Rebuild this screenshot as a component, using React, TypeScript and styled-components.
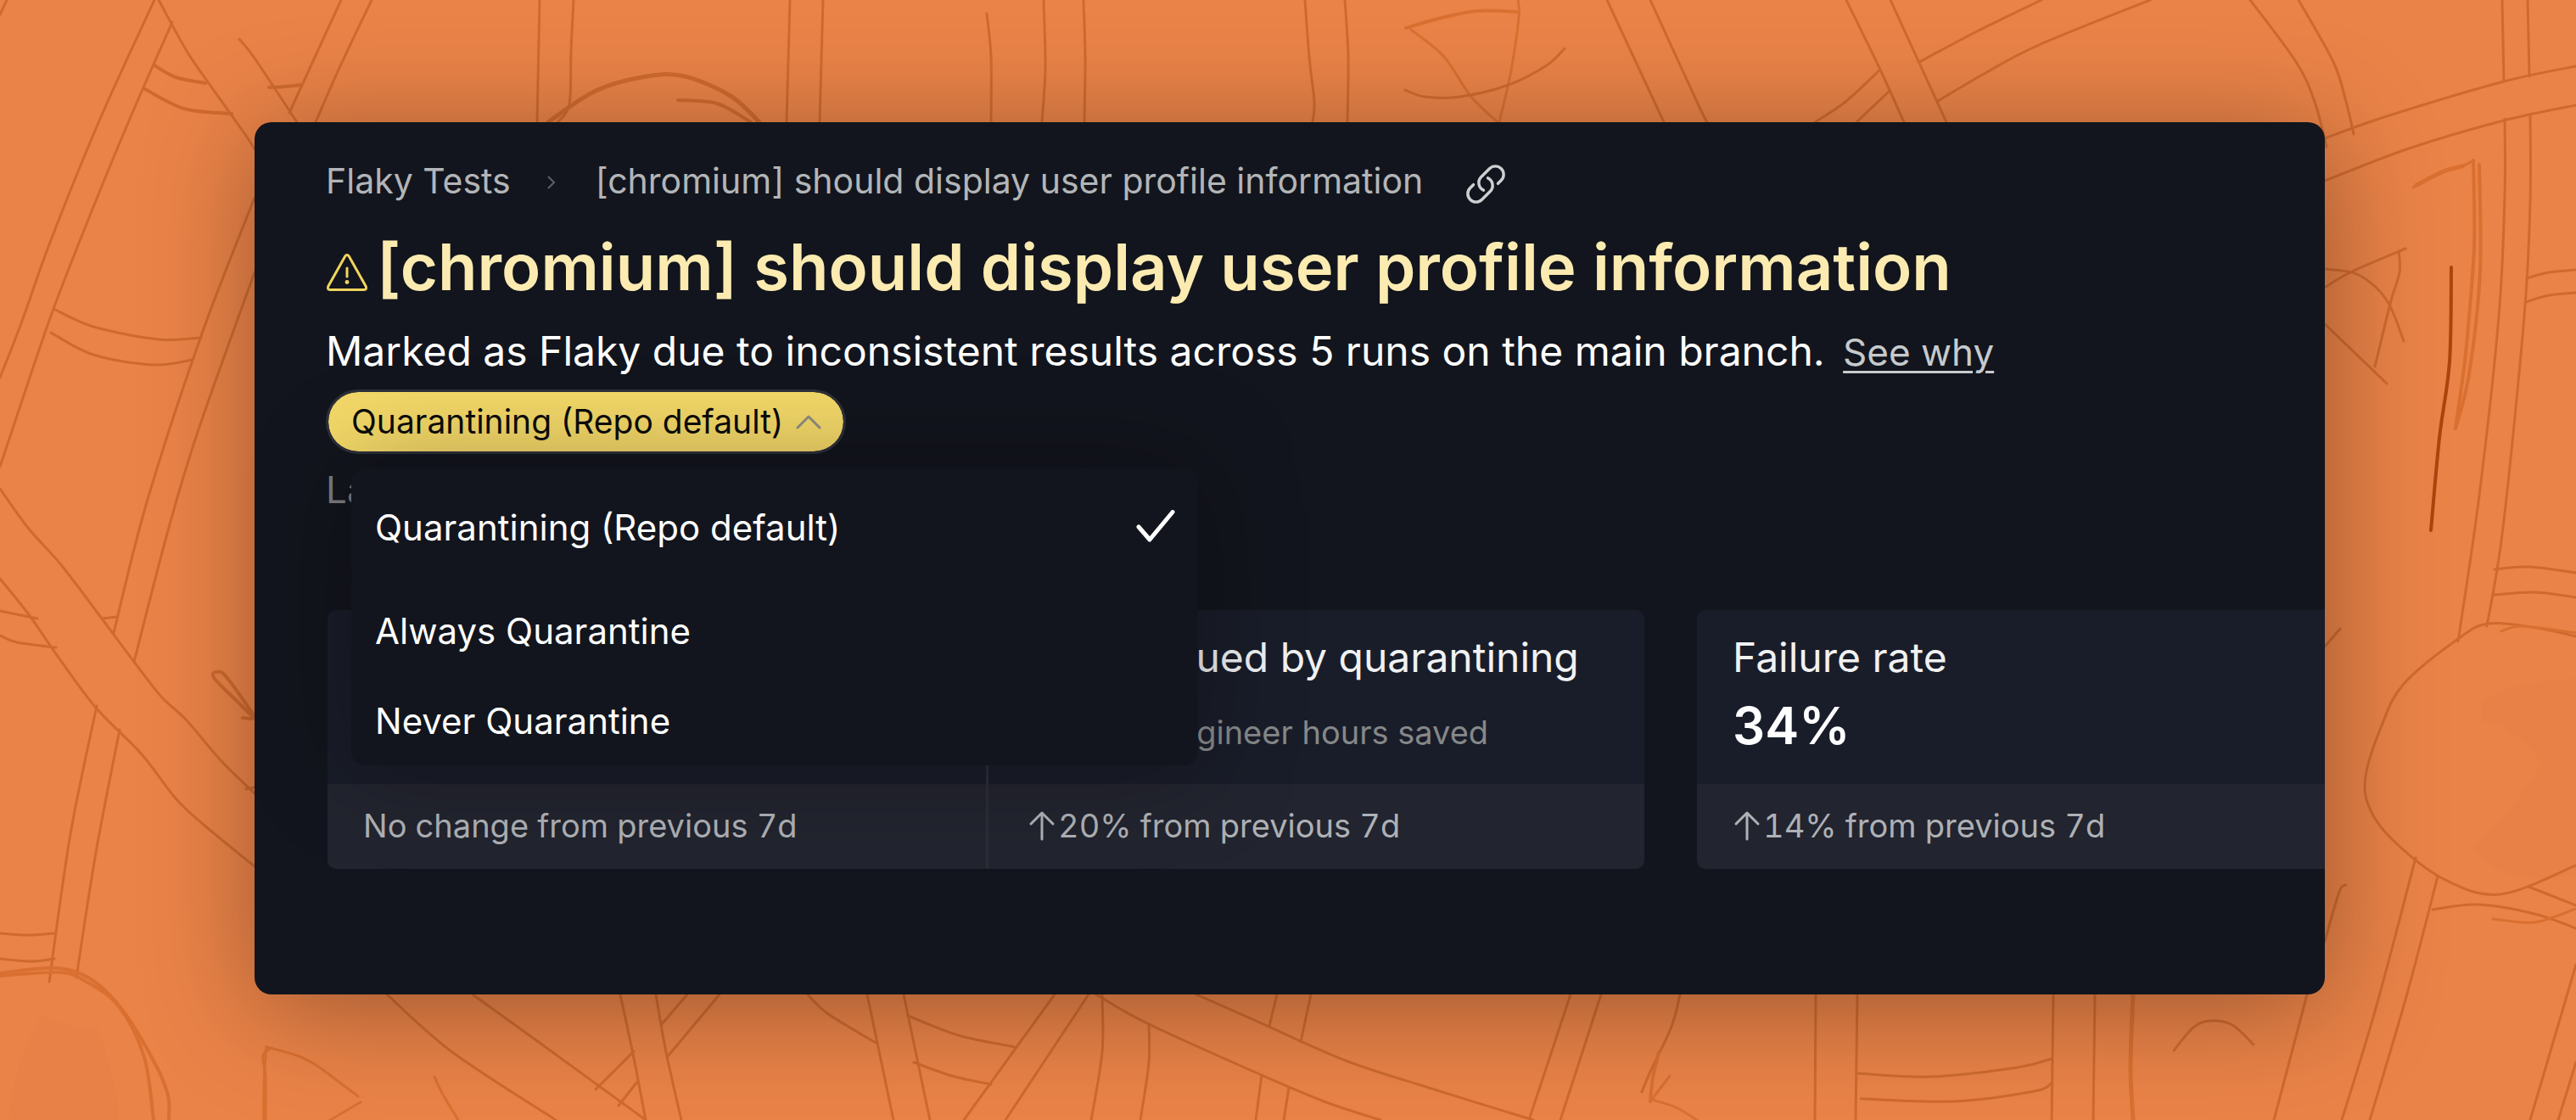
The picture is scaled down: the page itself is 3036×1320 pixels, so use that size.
import React, { useState } from "react";
import styled, { createGlobalStyle } from "styled-components";

const GlobalStyle = createGlobalStyle`
  *, *::before, *::after { box-sizing: border-box; }
  body { margin: 0; background: #ea8348; }
  button { font: inherit; color: inherit; background: none; border: 0; cursor: pointer; text-align: left; }
`;

/* ---------- background sketch ---------- */

type Stroke = { p: number[]; w?: number; c?: string };

const LINE = "#cf6a2f";
const SOFT = "#d97031";
const INK = "#ad440d";

const strokes: Stroke[] = [
  // top left girders
  { p: [8, 0, 0, 17] },
  { p: [182, 0, 118, 140, 60, 283, 25, 381, 0, 445] },
  { p: [203, 26, 153, 140, 110, 244, 63, 364, 22, 484, 0, 550] },
  { p: [187, 0, 220, 60, 246, 98, 290, 160, 300, 176] },
  { p: [182, 77, 207, 91, 242, 98], w: 4 },
  { p: [171, 105, 217, 128, 273, 134], w: 4 },
  { p: [402, 0, 341, 133] },
  { p: [438, 0, 400, 80, 372, 144] },
  { p: [282, 46, 301, 70, 350, 144] },
  { p: [317, 103, 336, 102, 354, 100], w: 4 },
  { p: [636, 0, 633, 144] },
  { p: [676, 0, 673, 60, 671, 123, 657, 144] },
  { p: [646, 144, 702, 107, 762, 90, 807, 90, 861, 113, 895, 144], w: 5 },
  { p: [799, 118, 845, 122, 885, 144], w: 4 },
  { p: [931, 0, 927, 144] },
  { p: [970, 0, 966, 144] },
  // top middle
  { p: [1163, 16, 1168, 67, 1168, 144] },
  { p: [1230, 0, 1232, 80, 1228, 144] },
  { p: [1277, 0, 1279, 70, 1278, 144] },
  { p: [1538, 0, 1543, 67, 1549, 120, 1547, 144] },
  { p: [1585, 0, 1589, 67, 1588, 144] },
  { p: [1789, 0, 1790, 20, 1781, 83, 1767, 144], c: SOFT },
  { p: [1789, 14, 1740, 13, 1695, 22, 1657, 33], w: 4, c: SOFT },
  { p: [1663, 35, 1702, 67, 1733, 113, 1765, 144], c: SOFT },
  { p: [1656, 106, 1679, 114, 1721, 114, 1778, 100, 1823, 77, 1844, 57] },
  { p: [1894, 0, 1961, 144] },
  { p: [1945, 0, 2000, 120, 2012, 144] },
  // top right
  { p: [2176, 0, 2215, 80, 2244, 144] },
  { p: [2228, 0, 2294, 144] },
  { p: [2406, 0, 2330, 37, 2262, 73] },
  { p: [2534, 0, 2403, 53, 2340, 86, 2284, 119] },
  { p: [2215, 83, 2175, 120, 2139, 144] },
  { p: [2227, 107, 2188, 144] },
  { p: [2652, 0, 2706, 73, 2728, 120, 2742, 173] },
  { p: [2709, 0, 2750, 73, 2765, 120, 2774, 158] },
  { p: [3036, 78, 2951, 96, 2813, 137, 2740, 163] },
  { p: [3036, 124, 2951, 142, 2839, 175, 2740, 213] },
  { p: [2949, 0, 2951, 95] },
  { p: [2979, 0, 2981, 90] },
  { p: [2952, 140, 2952, 230, 2945, 373, 2922, 584, 2897, 756] },
  { p: [2982, 136, 2982, 238, 2975, 373, 2950, 622, 2931, 738] },
  { p: [2844, 221, 2870, 206, 2902, 196, 2915, 189], w: 3, c: SOFT },
  { p: [2915, 189, 2916, 290, 2908, 396, 2903, 441, 2894, 505], w: 4, c: SOFT },
  { p: [2848, 218, 2880, 202, 2902, 196], w: 5, c: SOFT },
  { p: [2922, 194, 2923, 321, 2910, 441, 2894, 505], w: 4, c: SOFT },
  { p: [2889, 315, 2887, 426, 2875, 516, 2865, 625], w: 4, c: INK },
  { p: [2740, 339, 2770, 321, 2835, 293] },
  { p: [2827, 296, 2828, 321, 2817, 358, 2799, 432] },
  { p: [2740, 317, 2780, 324, 2813, 354, 2833, 402] },
  { p: [2740, 382, 2813, 452] },
  { p: [2978, 328, 3004, 321, 3036, 318] },
  { p: [2977, 356, 3004, 348, 3036, 345] },
  { p: [2940, 671, 2980, 668, 3036, 675] },
  { p: [2940, 701, 2987, 698, 3036, 704] },
  // right boulder
  { p: [3036, 750, 2990, 740, 2933, 735, 2897, 753, 2833, 806, 2807, 855, 2788, 915, 2793, 953, 2820, 990, 2880, 1036, 2947, 1054, 3036, 1020] },
  { p: [2948, 744, 2973, 738, 3036, 746], c: SOFT },
  { p: [2740, 762, 2758, 741] },
  { p: [2740, 1109, 2757, 1051, 2765, 1043] },
  { p: [2847, 1011, 2801, 1185, 2760, 1320] },
  { p: [2873, 1033, 2837, 1171, 2793, 1320] },
  { p: [2867, 1072, 2920, 1066, 2987, 1077, 3036, 1094] },
  { p: [2980, 1045, 3036, 1067] },
  { p: [2938, 1083, 2987, 1087, 3036, 1071], c: SOFT },
  { p: [3036, 1137, 2982, 1320] },
  { p: [3036, 1252, 3015, 1320] },
  // left side
  { p: [63, 364, 110, 385, 187, 400, 237, 398] },
  { p: [60, 392, 110, 418, 180, 430, 227, 424] },
  { p: [300, 233, 237, 396, 173, 592, 134, 746] },
  { p: [300, 321, 233, 509, 197, 629, 158, 780] },
  { p: [0, 576, 33, 622, 73, 667, 120, 729, 158, 780, 190, 821, 220, 849, 260, 896, 300, 935] },
  { p: [0, 682, 33, 723, 67, 772, 113, 834, 167, 889, 207, 941, 240, 972, 300, 1021] },
  { p: [0, 720, 44, 729] },
  { p: [0, 749, 20, 757, 66, 763] },
  { p: [120, 729, 138, 727] },
  { p: [114, 832, 83, 983, 58, 1157] },
  { p: [141, 860, 113, 1005, 90, 1152] },
  { p: [0, 1100, 33, 1102, 63, 1100] },
  { p: [0, 1130, 37, 1133, 64, 1130] },
  { p: [0, 1147, 67, 1141, 110, 1156, 147, 1194, 183, 1254, 198, 1291, 199, 1320], w: 4, c: SOFT },
  { p: [0, 1150, 70, 1146, 100, 1156, 140, 1186, 170, 1246, 181, 1320], w: 4, c: SOFT },
  { p: [300, 844, 267, 798, 255, 792, 253, 800, 285, 832, 298, 846, 286, 846], w: 4 },
  { p: [300, 928, 290, 930] },
  { p: [313, 1320, 313, 1270, 310, 1244, 320, 1235], c: SOFT },
  // bottom
  { p: [314, 1234, 350, 1244, 372, 1255, 398, 1274, 422, 1292], w: 3, c: SOFT },
  { p: [425, 1299, 389, 1320], c: SOFT },
  { p: [512, 1269, 522, 1290, 540, 1320], c: SOFT },
  { p: [456, 1172, 533, 1240, 655, 1320] },
  { p: [557, 1172, 647, 1237, 761, 1320] },
  { p: [731, 1172, 747, 1247, 761, 1320] },
  { p: [773, 1172, 785, 1240, 803, 1320] },
  { p: [810, 1172, 780, 1207] },
  { p: [848, 1172, 787, 1245] },
  { p: [747, 1239, 702, 1284] },
  { p: [751, 1275, 729, 1303] },
  { p: [952, 1172, 976, 1195, 1034, 1230] },
  { p: [1022, 1172, 1053, 1320] },
  { p: [1065, 1172, 1096, 1320] },
  { p: [1070, 1197, 1129, 1220, 1196, 1234] },
  { p: [1077, 1252, 1122, 1268, 1168, 1278] },
  { p: [1243, 1172, 1196, 1237, 1136, 1320] },
  { p: [1283, 1172, 1185, 1320] },
  { p: [1299, 1172, 1299, 1240, 1286, 1320] },
  { p: [1354, 1207, 1354, 1253, 1344, 1320] },
  { p: [1292, 1172, 1354, 1207, 1480, 1264, 1560, 1298, 1627, 1320] },
  { p: [1410, 1172, 1480, 1203, 1586, 1250, 1684, 1282, 1807, 1320] },
  { p: [1505, 1172, 1496, 1209] },
  { p: [1545, 1172, 1533, 1228] },
  { p: [1487, 1267, 1480, 1320] },
  { p: [1519, 1282, 1513, 1320] },
  { p: [1851, 1172, 1802, 1320] },
  { p: [1887, 1172, 1839, 1320] },
  { p: [1980, 1172, 1970, 1210, 1945, 1263, 1935, 1287] },
  { p: [1955, 1240, 1948, 1270, 1945, 1298], w: 4, c: SOFT },
  { p: [1945, 1298, 1968, 1268], c: SOFT },
  { p: [1947, 1296, 1975, 1305, 2000, 1320], c: SOFT },
  { p: [2140, 1172, 2139, 1320] },
  { p: [2189, 1172, 2187, 1320] },
  { p: [2420, 1172, 2418, 1320] },
  { p: [2469, 1172, 2467, 1320] },
  { p: [2514, 1172, 2511, 1257, 2514, 1320], w: 5, c: SOFT },
  { p: [2190, 1265, 2276, 1269, 2378, 1258, 2417, 1248] },
  { p: [2193, 1295, 2304, 1298, 2398, 1286, 2417, 1277] },
  { p: [2562, 1238, 2586, 1210, 2607, 1203, 2631, 1208, 2656, 1231] },
  { p: [2719, 1172, 2680, 1320] },
];

/** Smooth path through a flat list of x,y points (Catmull-Rom to Bézier). */
function smooth(p: number[]): string {
  const n = p.length / 2;
  const x = (i: number) => p[2 * Math.max(0, Math.min(n - 1, i))];
  const y = (i: number) => p[2 * Math.max(0, Math.min(n - 1, i)) + 1];
  let d = `M${x(0)} ${y(0)}`;
  for (let i = 0; i < n - 1; i++) {
    d +=
      `C${x(i) + (x(i + 1) - x(i - 1)) / 6} ${y(i) + (y(i + 1) - y(i - 1)) / 6} ` +
      `${x(i + 1) - (x(i + 2) - x(i)) / 6} ${y(i + 1) - (y(i + 2) - y(i)) / 6} ` +
      `${x(i + 1)} ${y(i + 1)}`;
  }
  return d;
}

const Backdrop = styled.svg`
  position: absolute;
  inset: 0;
  width: 100%;
  height: 100%;
`;

const Sketch = () => (
  <Backdrop viewBox="0 0 3036 1320" preserveAspectRatio="xMidYMid slice" fill="none" strokeLinecap="round" aria-hidden="true">
    <path d="M10 1320Q20 1240 50 1197Q90 1215 115 1210Q125 1240 137 1285L140 1320Z" fill="#e88147" />
    <path d="M2924 830Q2960 800 3036 800V1030Q2960 1050 2912 1000Q2960 960 2996 900Q2960 850 2924 850Z" fill="#e88147" />
    {strokes.map((s, i) => (
      <path key={i} d={smooth(s.p)} stroke={s.c ?? LINE} strokeWidth={s.w ?? 3} />
    ))}
    <path d="M314 1234Q310 1270 311 1320" stroke={SOFT} strokeWidth="3" />
  </Backdrop>
);

/* ---------- layout ---------- */

const Page = styled.main`
  position: relative;
  min-height: 100vh;
  padding: 144px 296px 148px 300px;
  overflow: hidden;
  font-family: Inter, "Liberation Sans", sans-serif;
  color: #ffffff;
`;

const Panel = styled.section`
  position: relative;
  padding: 44px 0 148px 84px;
  border-radius: 20px;
  background: #12151d;
  box-shadow: 4px 16px 130px rgba(0, 0, 0, 0.34);
`;

const Crumbs = styled.nav`
  display: flex;
  align-items: center;
  height: 50px;
  font-size: 41px;
  line-height: 50px;
  color: #b3b5b8;

  a { color: inherit; text-decoration: none; }
  svg { display: block; }
`;

const CrumbArrow = styled.svg`
  width: 12px;
  height: 18px;
  margin: 4px 46px 0 42px;
`;

const CopyLink = styled.button`
  margin: 8px 0 0 48px;
  padding: 0;
  color: #cdd0d2;
`;

const TitleRow = styled.div`
  display: flex;
  align-items: center;
  gap: 10px;
  margin-top: 32px;
`;

const Title = styled.h1`
  margin: 0;
  font-size: 76px;
  line-height: 88px;
  font-weight: 600;
  color: #fbebb1;
`;

const WarningIcon = styled.svg`
  width: 50px;
  height: 46px;
  margin-top: 14px;
`;

const Summary = styled.p`
  margin: 28px 0 0;
  font-size: 48px;
  line-height: 56px;
`;

const SeeWhy = styled.a`
  margin-left: 8px;
  font-size: 44px;
  color: #c6cacd;
  text-underline-offset: 6px;
  text-decoration-thickness: 3px;
`;

const Picker = styled.div`
  position: relative;
  width: max-content;
  margin-top: 16px;
`;

const Pill = styled.button`
  display: flex;
  align-items: center;
  gap: 15px;
  height: 76px;
  padding: 0 26px 0 27px;
  border: 3px solid #2d2f39;
  border-radius: 38px;
  background: #f3d868;
  background-clip: padding-box;
  font-size: 39px;
  line-height: 48px;
  color: #0c0c0a;
`;

const Menu = styled.ul`
  position: absolute;
  z-index: 1;
  top: 93px;
  left: 30px;
  width: 998px;
  margin: 0;
  padding: 0;
  list-style: none;
  border-radius: 16px;
  background: #12151d;
  box-shadow: 0 0 120px rgba(12, 6, 8, 0.34);
`;

const Option = styled.button<{ $tall?: boolean }>`
  display: flex;
  align-items: center;
  justify-content: space-between;
  width: 100%;
  height: ${(p) => (p.$tall ? 138 : 106)}px;
  padding: 2px 26px 0 28px;
  font-size: 42px;
  line-height: 50px;
`;

const LastRun = styled.p`
  margin: 16px 0 0;
  font-size: 44px;
  line-height: 52px;
  color: #7b7d80;
`;

const Stats = styled.div`
  display: flex;
  gap: 62px;
  margin: 116px 0 0;
  padding-left: 2px;
  overflow: hidden;
`;

const Group = styled.div<{ $grow?: boolean }>`
  display: flex;
  flex: ${(p) => (p.$grow ? "1 0 auto" : "none")};
  overflow: hidden;
  border-radius: ${(p) => (p.$grow ? "10px 0 0 10px" : "10px")};
`;

const Stat = styled.article`
  --inset: 42px;
  display: flex;
  flex-direction: column;
  width: 776px;
  background: #191d29;

  & + & {
    --inset: 46px;
    border-left: 3px solid #2b2d37;
  }
`;

const StatBody = styled.div`
  height: 205px;
  padding: 28px 0 0 var(--inset);
`;

const StatName = styled.h2`
  margin: 0;
  font-size: 48px;
  line-height: 56px;
  font-weight: 400;
  color: #f0f1f2;
  white-space: nowrap;
`;

const StatValue = styled.p`
  display: flex;
  align-items: baseline;
  gap: 32px;
  margin: 14px 0 0;
  font-size: 60px;
  line-height: 76px;
  font-weight: 600;

  small { font-size: 38px; font-weight: 400; color: #868889; }
`;

const StatTrend = styled.p`
  display: flex;
  align-items: center;
  gap: 2px;
  height: 100px;
  margin: 0;
  padding: 0 0 2px var(--inset);
  background: #22242f;
  font-size: 38px;
  line-height: 46px;
  font-variant-numeric: tabular-nums;
  color: #aeb1b5;
`;

const UpArrow = () => (
  <svg width="34" height="36" viewBox="0 0 34 36" fill="none" stroke="currentColor" strokeWidth="3" strokeLinecap="round" strokeLinejoin="round" aria-hidden="true">
    <path d="M17 34V3M4 16L17 3L30 16" />
  </svg>
);

type StatData = { name?: string; value?: string; unit?: string; trend: string; up?: boolean };

const StatCard = ({ name, value, unit, trend, up }: StatData) => (
  <Stat>
    <StatBody>
      {name && <StatName>{name}</StatName>}
      {value && (
        <StatValue>
          {value}
          {unit && <small>{unit}</small>}
        </StatValue>
      )}
    </StatBody>
    <StatTrend>
      {up && <UpArrow />}
      {trend}
    </StatTrend>
  </Stat>
);

const options = ["Quarantining (Repo default)", "Always Quarantine", "Never Quarantine"];
const testName = "[chromium] should display user profile information";

export default function App() {
  const [open, setOpen] = useState(true);
  const [selected, setSelected] = useState(0);

  return (
    <>
      <GlobalStyle />
      <Page>
        <Sketch />
        <Panel>
          <Crumbs aria-label="Breadcrumb">
            <a href="#tests">Flaky Tests</a>
            <CrumbArrow viewBox="0 0 12 18" fill="none" stroke="#5d6066" strokeWidth="2" aria-hidden="true">
              <path d="M2 2L9 9L2 16" />
            </CrumbArrow>
            <span>{testName}</span>
            <CopyLink aria-label="Copy link">
              <svg width="52" height="52" viewBox="0 0 24 24" fill="none" stroke="currentColor" strokeWidth="1.6" strokeLinecap="round" strokeLinejoin="round">
                <path d="M13.19 8.688a4.5 4.5 0 0 1 1.242 7.244l-4.5 4.5a4.5 4.5 0 0 1-6.364-6.364l1.757-1.757m13.35-.622 1.757-1.757a4.5 4.5 0 0 0-6.364-6.364l-4.5 4.5a4.5 4.5 0 0 0 1.242 7.244" />
              </svg>
            </CopyLink>
          </Crumbs>

          <TitleRow>
            <WarningIcon viewBox="0 0 50 46" fill="none" stroke="#f1d45f" strokeWidth="3" strokeLinejoin="round" aria-hidden="true">
              <path d="M22.6 4.2Q25 0.800 27.400 4.200L47.200 39.500Q48.600 43.500 45 43.500H5Q1.400 43.500 2.800 39.500Z" />
              <path d="M25 18V28" strokeLinecap="round" />
              <circle cx="25" cy="34.500" r="2.400" fill="#f1d45f" stroke="none" />
            </WarningIcon>
            <Title>{testName}</Title>
          </TitleRow>

          <Summary>
            Marked as Flaky due to inconsistent results across 5 runs on the main branch. <SeeWhy href="#why">See why</SeeWhy>
          </Summary>

          <Picker>
            <Pill type="button" aria-haspopup="listbox" aria-expanded={open} onClick={() => setOpen(!open)}>
              {options[selected]}
              <svg width="30" height="18" viewBox="0 0 30 18" fill="none" stroke="#908d80" strokeWidth="3" strokeLinecap="round" strokeLinejoin="round" aria-hidden="true">
                <path d="M2 16L15 3L28 16" />
              </svg>
            </Pill>
            {open && (
              <Menu>
                {options.map((label, i) => (
                  <li key={label}>
                    <Option type="button" $tall={i === 0} aria-pressed={i === selected} onClick={() => setSelected(i)}>
                      {label}
                      {i === selected && (
                        <svg width="48" height="42" viewBox="0 0 48 42" fill="none" stroke="#ffffff" strokeWidth="5" strokeLinecap="round" strokeLinejoin="round" aria-hidden="true">
                          <path d="M4 20L17 35L44 2.500" />
                        </svg>
                      )}
                    </Option>
                  </li>
                ))}
              </Menu>
            )}
          </Picker>

          <LastRun>Last run</LastRun>

          <Stats>
            <Group>
              <StatCard trend="No change from previous 7d" />
              <StatCard name="PRs rescued by quarantining" value="12.4" unit="Engineer hours saved" trend="20% from previous 7d" up />
            </Group>
            <Group $grow>
              <StatCard name="Failure rate" value="34%" trend="14% from previous 7d" up />
            </Group>
          </Stats>
        </Panel>
      </Page>
    </>
  );
}
